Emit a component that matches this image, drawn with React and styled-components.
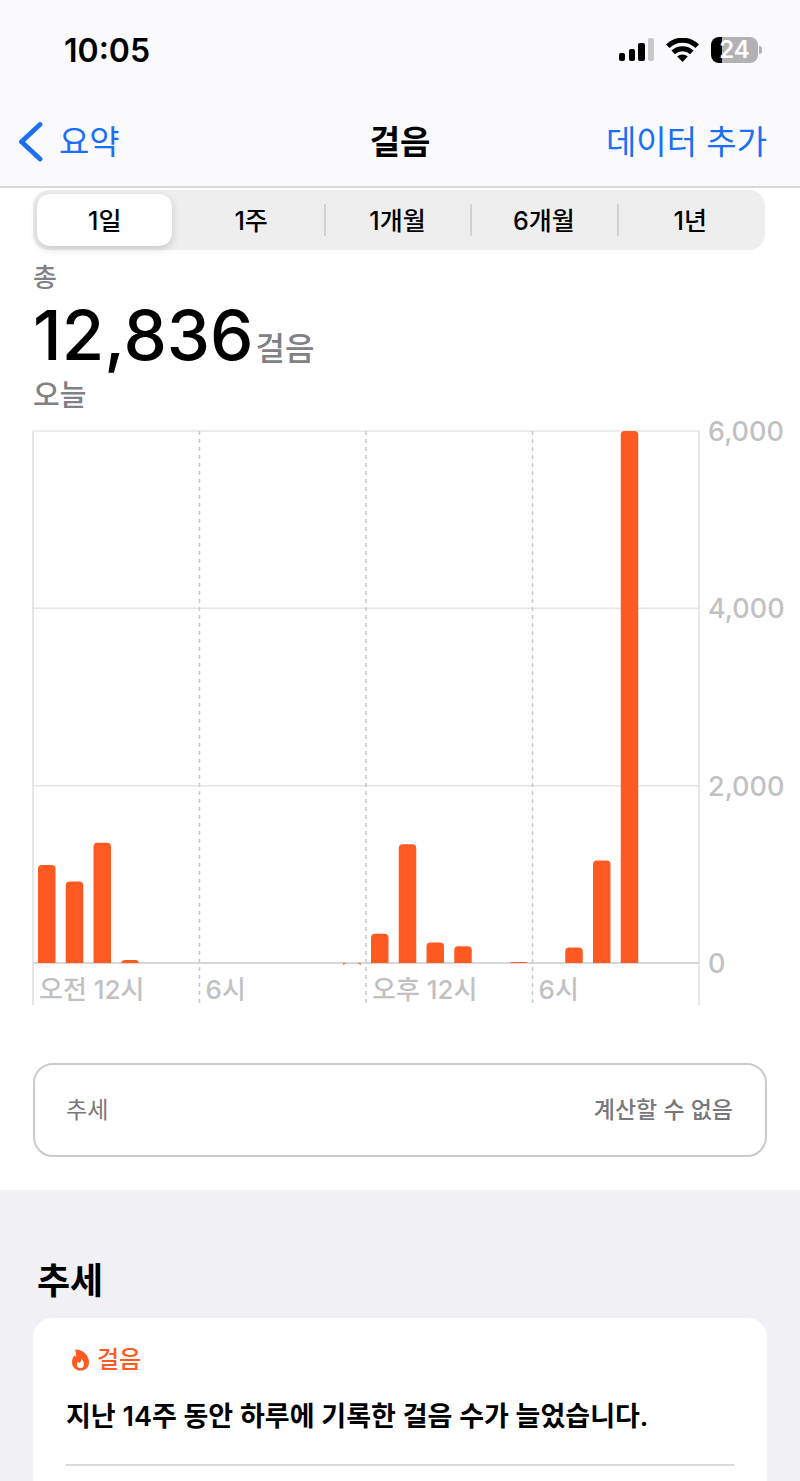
import { useState } from "react";
import styled, { createGlobalStyle } from "styled-components";

const GlobalStyle = createGlobalStyle`
  * {
    box-sizing: border-box;
  }

  body {
    margin: 0;
    background-color: #ffffff;
    color: #000000;
    font-family: Inter, "Noto Sans CJK KR", sans-serif;
  }

  button {
    font-family: inherit;
  }
`;

const Page = styled.div`
  overflow: hidden;
`;

const Header = styled.header`
  background-color: #fafafc;
  border-bottom: 2px solid #d9d9db;
`;

const StatusBar = styled.div`
  display: flex;
  justify-content: space-between;
  align-items: center;
  height: 102px;
  padding: 0 38px 0 64px;
`;

const Clock = styled.span`
  font-size: 32px;
  line-height: 40px;
  font-weight: 600;
`;

const StatusIcons = styled.div`
  display: flex;
  align-items: center;
  gap: 12px;
  padding-bottom: 2px;
`;

const NavBar = styled.nav`
  display: grid;
  grid-template-columns: 1fr auto 1fr;
  align-items: center;
  height: 84px;
  padding: 0 18px 4px;
`;

const NavLink = styled.a`
  display: flex;
  align-items: center;
  justify-self: ${({ $end }) => ($end ? "end" : "start")};
  gap: 16px;
  margin-right: ${({ $end }) => ($end ? "15px" : "0")};
  color: #1a6ff5;
  font-size: 33px;
  line-height: 48px;
  font-weight: 400;
  text-decoration: none;
`;

const NavTitle = styled.h1`
  margin: 0;
  font-size: 33px;
  line-height: 48px;
  font-weight: 600;
`;

const Segments = styled.div`
  display: grid;
  grid-template-columns: repeat(5, 1fr);
  height: 60px;
  margin: 2px 35px 0 33px;
  padding: 4px 0;
  background-color: #eeeeee;
  border-radius: 16px;
`;

const Segment = styled.button`
  display: flex;
  align-items: center;
  justify-content: center;
  margin: 0 7px 0 4px;
  padding: 2px 0 0;
  border: none;
  border-radius: 13px;
  background-color: ${({ $active }) => ($active ? "#ffffff" : "transparent")};
  box-shadow: ${({ $active }) => ($active ? "0 3px 8px rgba(0,0,0,0.16)" : "none")};
  color: #000000;
  font-size: 25px;
  line-height: 36px;
  font-weight: 500;
  cursor: pointer;
`;

const SegmentCell = styled.div`
  display: grid;
  background: ${({ $divider }) =>
    $divider ? "linear-gradient(#d2d2d4, #d2d2d4) right center / 2px 32px no-repeat" : "none"};
`;

const Summary = styled.section`
  padding: 8px 33px 0;
`;

const SummaryLabel = styled.p`
  margin: 0;
  color: #808085;
  font-size: ${({ $large }) => ($large ? "29px" : "26px")};
  line-height: 40px;
  font-weight: 500;
`;

const Total = styled.p`
  display: flex;
  align-items: baseline;
  gap: 2px;
  margin: 0 0 4px;
  font-size: 69px;
  line-height: 74px;
  font-weight: 500;
`;

const Unit = styled.span`
  color: #808085;
  font-size: 32px;
  line-height: 40px;
  font-weight: 500;
`;

const Chart = styled.svg`
  display: block;
  width: calc(100% - 32px);
  margin-left: 32px;
`;

const AxisText = styled.text`
  fill: #c1c1c3;
  font-size: ${({ $time }) => ($time ? "26px" : "27px")};
  font-weight: 500;
`;

const TrendBox = styled.section`
  display: flex;
  justify-content: space-between;
  align-items: center;
  height: 94px;
  margin: 55px 33px 33px;
  padding: 0 32px 0 31px;
  border: 2px solid #cbcbcf;
  border-radius: 20px;
  color: #77777c;
  font-size: 23px;
  line-height: 36px;
`;

const TrendValue = styled.span`
  font-weight: 500;
`;

const Trends = styled.section`
  padding: 64px 33px 0;
  background-color: #f1f0f5;
`;

const TrendsTitle = styled.h2`
  margin: 0 0 10px 4px;
  font-size: 36px;
  line-height: 54px;
  font-weight: 700;
`;

const Card = styled.article`
  padding: 24px 33px 16px;
  background-color: #ffffff;
  border-radius: 20px 20px 0 0;
`;

const CardCategory = styled.div`
  display: flex;
  align-items: center;
  gap: 8px;
  padding-left: 6px;
  color: #ff5a22;
  font-size: 24px;
  line-height: 36px;
  font-weight: 500;
`;

const CardText = styled.p`
  margin: 18px 0 26px;
  font-size: 27px;
  line-height: 42px;
  font-weight: 600;
`;

const Divider = styled.hr`
  height: 2px;
  margin: 0;
  border: none;
  background-color: #dadadc;
`;

const ranges = ["1일", "1주", "1개월", "6개월", "1년"];

const hourlySteps = [
  1105, 920, 1355, 35, 0, 0, 0, 0, 0, 0, 0, 6,
  330, 1340, 230, 190, 0, 12, 0, 175, 1155, 6000, 0, 0,
];

const timeLabels = ["오전 12시", "6시", "오후 12시", "6시"];

const PLOT_TOP = 15;
const PLOT_BOTTOM = 547;
const PLOT_WIDTH = 666;
const MAX_STEPS = 6000;

const toY = (steps) =>
  PLOT_BOTTOM - (steps / MAX_STEPS) * (PLOT_BOTTOM - PLOT_TOP);

function barPath(x, steps) {
  const top = toY(steps);
  // almost empty hours only leave their rounded corners on the baseline
  if (steps < 10) {
    return `M${x} ${PLOT_BOTTOM + 2}v-2h3zM${x + 17.5} ${PLOT_BOTTOM + 2}v-2h-3z`;
  }
  const r = Math.min(4, PLOT_BOTTOM - top);
  return `M${x} ${PLOT_BOTTOM}V${top + r}q0 ${-r} 4 ${-r}h9.5q4 0 4 ${r}V${PLOT_BOTTOM}z`;
}

function StepsChart() {
  return (
    <Chart viewBox="0 0 768 592" role="img" aria-label="시간별 걸음 수">
      {[0, 2000, 4000, 6000].map((value) => (
        <g key={value}>
          <path
            d={`M1 ${toY(value)}H${PLOT_WIDTH + 1}`}
            stroke={value ? "#e5e5e7" : "#cacacd"}
            strokeWidth="1.5"
          />
          <AxisText x="676" y={toY(value) + 10}>
            {value.toLocaleString("en-US")}
          </AxisText>
        </g>
      ))}
      {timeLabels.map((label, i) => {
        const x = 1 + (i * PLOT_WIDTH) / 4;
        return (
          <g key={i}>
            <path
              d={`M${x} ${PLOT_TOP}V589`}
              stroke={i ? "#c8c8cb" : "#dedee0"}
              strokeWidth="1.5"
              strokeDasharray={i ? "4 4" : "none"}
            />
            <AxisText $time x={x + 6} y="583">
              {label}
            </AxisText>
          </g>
        );
      })}
      <path d={`M${PLOT_WIDTH + 1} ${PLOT_TOP}V589`} stroke="#dedee0" strokeWidth="1.5" />
      {hourlySteps.map((steps, hour) =>
        steps > 0 ? (
          <path key={hour} d={barPath(6 + hour * 27.75, steps)} fill="#ff5a22" />
        ) : null
      )}
    </Chart>
  );
}

function SignalIcon() {
  return (
    <svg width="35" height="24" viewBox="0 0 35 24" aria-hidden="true">
      <rect x="0" y="15" width="6" height="8" rx="2" />
      <rect x="10" y="11" width="6" height="12" rx="2" />
      <rect x="19" y="5" width="7" height="18" rx="2" />
      <rect x="29" y="0" width="6" height="23" rx="2" fill="#c8c8ca" />
    </svg>
  );
}

function WifiIcon() {
  return (
    <svg width="33" height="24" viewBox="0 0 33 24" aria-hidden="true">
      <g fill="none" stroke="#000000" strokeWidth="5">
        <path d="M1.8 8.2a21 21 0 0 1 29.4 0" />
        <path d="M7.2 14.4a13.4 13.4 0 0 1 18.6 0" />
      </g>
      <path d="M11.2 18.6a7.8 7.8 0 0 1 10.6 0L16.5 24z" />
    </svg>
  );
}

const Battery = styled.div`
  display: flex;
  align-items: center;
  gap: 1px;
`;

const BatteryBody = styled.div`
  width: 47px;
  height: 26px;
  border-radius: 8px;
  background: linear-gradient(to right, #000000 24%, #b2b2b4 24%);
  color: #ffffff;
  font-size: 24px;
  line-height: 26px;
  font-weight: 600;
  text-align: center;
`;

const BatteryTip = styled.div`
  width: 3px;
  height: 8px;
  border-radius: 0 4px 4px 0;
  background-color: #b2b2b4;
`;

function BackIcon() {
  return (
    <svg width="25" height="40" viewBox="0 0 25 40" aria-hidden="true">
      <path
        d="M22 2.5L3.5 19.8L22 37"
        fill="none"
        stroke="#1a6ff5"
        strokeWidth="4.8"
        strokeLinecap="round"
        strokeLinejoin="round"
      />
    </svg>
  );
}

function FlameIcon() {
  return (
    <svg width="17" height="22" viewBox="0 0 17 22" aria-hidden="true">
      <path
        fill="#ff5a22"
        fillRule="evenodd"
        d="M2.8.5C9.8 0 17 5.6 17 13.2C17 18.5 13.5 21.5 8.5 21.5C3.5 21.5 0 18.2 0 13.2C0 10.3 1 8.3 2.2 6.5C2.8 7 3.4 7.5 3.9 8C4.4 5.3 4.1 2.6 2.8.5ZM9.2 9.8C9.3 12 8.3 13.2 7.2 14.3C7 13.6 6.7 13.2 6.2 12.8C5.3 14 4.9 15 4.9 16C4.9 18 6.3 19.2 8.3 19.2C10.5 19.2 11.9 17.8 11.9 15.7C11.9 13.3 10.9 11.2 9.2 9.8Z"
      />
    </svg>
  );
}

export default function App() {
  const [range, setRange] = useState("1일");

  return (
    <Page>
      <GlobalStyle />
      <Header>
        <StatusBar>
          <Clock>10:05</Clock>
          <StatusIcons>
            <SignalIcon />
            <WifiIcon />
            <Battery>
              <BatteryBody>24</BatteryBody>
              <BatteryTip />
            </Battery>
          </StatusIcons>
        </StatusBar>
        <NavBar>
          <NavLink href="#summary">
            <BackIcon />
            요약
          </NavLink>
          <NavTitle>걸음</NavTitle>
          <NavLink href="#add" $end>
            데이터 추가
          </NavLink>
        </NavBar>
      </Header>

      <main>
        <Segments>
          {ranges.map((item, i) => (
            <SegmentCell key={item} $divider={i > 0 && i < ranges.length - 1}>
              <Segment
                type="button"
                $active={item === range}
                aria-pressed={item === range}
                onClick={() => setRange(item)}
              >
                {item}
              </Segment>
            </SegmentCell>
          ))}
        </Segments>

        <Summary id="summary">
          <SummaryLabel>총</SummaryLabel>
          <Total>
            12,836<Unit>걸음</Unit>
          </Total>
          <SummaryLabel $large>오늘</SummaryLabel>
        </Summary>

        <StepsChart />

        <TrendBox>
          <span>추세</span>
          <TrendValue>계산할 수 없음</TrendValue>
        </TrendBox>

        <Trends>
          <TrendsTitle>추세</TrendsTitle>
          <Card>
            <CardCategory>
              <FlameIcon />
              걸음
            </CardCategory>
            <CardText>지난 14주 동안 하루에 기록한 걸음 수가 늘었습니다.</CardText>
            <Divider />
          </Card>
        </Trends>
      </main>
    </Page>
  );
}
